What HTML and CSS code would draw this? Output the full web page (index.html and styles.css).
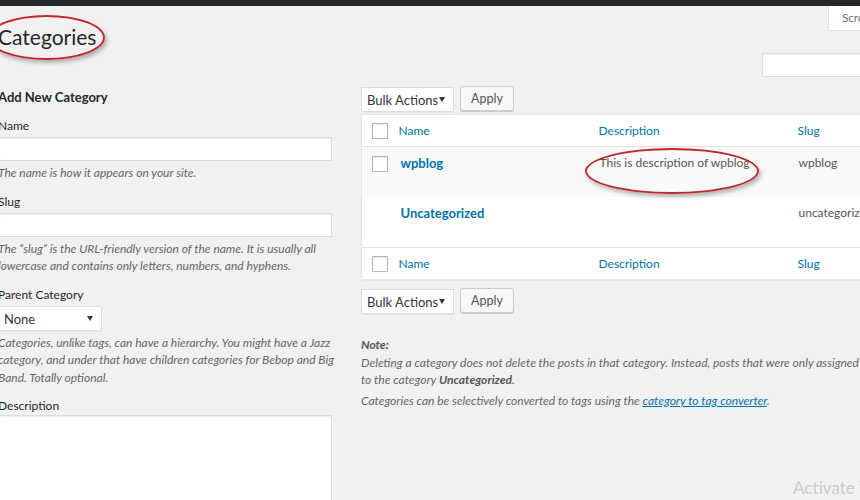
FILE: index.html
```html
<!DOCTYPE html>
<html lang="en">
<head>
<meta charset="utf-8">
<title>Categories</title>
<link rel="stylesheet" href="styles.css">
</head>
<body>
<div class="adminbar"></div>
<div class="wrap">
  <div class="head">
    <h1 class="title">Categories<span class="ring ring-title"></span></h1>
    <div class="screen-tab">Screen Options</div>
  </div>
  <div class="search-row"><input class="search" type="text"></div>
  <div class="cols">
    <div class="col-left">
      <h2 class="sub">Add New Category</h2>
      <div class="field">
        <label class="lbl">Name</label>
        <input class="inp" type="text">
        <p class="help">The name is how it appears on your site.</p>
      </div>
      <div class="field">
        <label class="lbl">Slug</label>
        <input class="inp" type="text">
        <p class="help">The “slug” is the URL-friendly version of the name. It is usually all lowercase and contains only letters, numbers, and hyphens.</p>
      </div>
      <div class="field">
        <label class="lbl">Parent Category</label>
        <div class="select parent">None<span class="caret"></span></div>
        <p class="help">Categories, unlike tags, can have a hierarchy. You might have a Jazz category, and under that have children categories for Bebop and Big Band. Totally optional.</p>
      </div>
      <div class="field">
        <label class="lbl">Description</label>
        <div class="textarea"></div>
      </div>
    </div>
    <div class="col-right">
      <div class="bulk">
        <div class="select bulk-sel">Bulk Actions<span class="caret"></span></div>
        <button class="btn">Apply</button>
      </div>
      <table class="list">
        <colgroup><col class="c-cb"><col class="c-name"><col class="c-desc"><col class="c-slug"></colgroup>
        <thead>
          <tr><th class="cb"><span class="check"></span></th><th>Name</th><th>Description</th><th>Slug</th></tr>
        </thead>
        <tbody>
          <tr class="alt">
            <td class="cb"><span class="check"></span></td>
            <td><a class="row-title">wpblog</a></td>
            <td class="desc-cell">This is description of wpblog<span class="ring ring-desc"></span></td>
            <td>wpblog</td>
          </tr>
          <tr class="last">
            <td class="cb"></td>
            <td><a class="row-title">Uncategorized</a></td>
            <td></td>
            <td>uncategorized</td>
          </tr>
        </tbody>
        <tfoot>
          <tr><th class="cb"><span class="check"></span></th><th>Name</th><th>Description</th><th>Slug</th></tr>
        </tfoot>
      </table>
      <div class="bulk bulk-bottom">
        <div class="select bulk-sel">Bulk Actions<span class="caret"></span></div>
        <button class="btn">Apply</button>
      </div>
      <div class="note">
        <p><strong class="note-h">Note:</strong><br>Deleting a category does not delete the posts in that category. Instead, posts that were only assigned to the deleted category are set<br>to the category <strong>Uncategorized</strong>.</p>
        <p>Categories can be selectively converted to tags using the <a class="link">category to tag converter</a>.</p>
      </div>
    </div>
  </div>
</div>
<div class="activate">Activate Windows</div>
</body>
</html>
```
FILE: styles.css
```css
html, body { margin: 0; padding: 0; }
body {
  background: #f1f1f1;
  font-family: Lato, "Liberation Sans", sans-serif;
  font-size: 12px;
  color: #444;
  overflow: hidden;
  width: 860px;
  height: 500px;
  position: relative;
}
.adminbar { height: 6px; background: #23282d; }
.wrap { margin-left: -2px; }
.head { display: flex; justify-content: space-between; align-items: flex-start; height: 47px; }
.title {
  position: relative;
  margin: 0; padding-top: 16px;
  font-size: 21px; font-weight: 400; line-height: 29px; color: #23282d;
}
.screen-tab {
  width: 120px; height: 25px; box-sizing: border-box;
  margin-right: -88px;
  background: #fff; border: 1px solid #e1e1e1; border-top: 0;
  color: #72777c; padding: 3px 0 0 13px; line-height: 18px; font-size: 12px; letter-spacing: -0.2px;
}
.search-row { display: flex; justify-content: flex-end; height: 34px; }
.search {
  width: 120px; height: 24px; box-sizing: border-box; margin: 0 -22px 0 0;
  border: 1px solid #ddd; background: #fff; box-shadow: inset 0 1px 2px rgba(0,0,0,.07);
}
.cols { display: grid; grid-template-columns: 352px 800px; column-gap: 11px; }
.sub { margin: 0; font-size: 13px; font-weight: 700; line-height: 20px; color: #23282d; }
.field { margin-top: 10px; }
.field + .field { margin-top: 11px; }
.lbl { display: block; line-height: 18px; color: #23282d; margin-bottom: 2px; }
.inp {
  display: block; width: 334px; height: 24px; box-sizing: border-box; margin: 0;
  border: 1px solid #ddd; background: #fff; box-shadow: inset 0 1px 2px rgba(0,0,0,.07);
}
.help { margin: 3px 0 0; font-style: italic; color: #666; line-height: 17.5px; }
.select {
  position: relative; box-sizing: border-box; height: 25px;
  border: 1px solid #ddd; background: #fff; color: #32373c;
  padding: 3px 0 0 5px; line-height: 18px; box-shadow: 0 1px 1px rgba(0,0,0,.04);
}
.caret {
  position: absolute; right: 8px; top: 9px; width: 0; height: 0;
  border-left: 3px solid transparent; border-right: 3px solid transparent;
  border-top: 5px solid #32373c;
}
.parent { width: 104px; font-size: 13px; }
.textarea {
  width: 334px; box-sizing: border-box; margin-top: -2px;
  height: 90px; border: 1px solid #ddd; background: #fff; box-shadow: inset 0 1px 2px rgba(0,0,0,.07);
}
.bulk { display: flex; gap: 6px; align-items: flex-start; height: 25px; }
.bulk-sel { width: 93px; font-size: 13px; }
.btn {
  height: 25px; padding: 0 10px; font: inherit; font-size: 12.5px; color: #555;
  background: #f7f7f7; border: 1px solid #ccc; border-radius: 3px;
  box-shadow: 0 1px 0 #ccc; line-height: 22px; margin-top: -1px;
}
.list {
  margin-top: 2px; width: 600px; table-layout: fixed; border-collapse: collapse;
  background: #fff; border: 1px solid #e5e5e5; box-shadow: 0 1px 1px rgba(0,0,0,.04);
}
.c-cb { width: 27px; } .c-name { width: 200px; } .c-desc { width: 199px; } .c-slug { width: 174px; }
.list th { text-align: left; font-weight: 400; color: #0073aa; padding: 8px 10px; line-height: 15px; height: 15px; }
.list thead tr { border-bottom: 1px solid #e1e1e1; }
.list tfoot tr { border-top: 1px solid #e1e1e1; }
.list td { vertical-align: top; padding: 6px 10px; line-height: 20px; color: #555; }
.list tbody tr { height: 50px; }
.list tbody tr.last { height: 51px; }
.list .alt { background: #f9f9f9; }
.list .cb { padding: 0 0 0 10px; vertical-align: middle; }
.list tbody .cb { vertical-align: top; padding-top: 9px; }
.check {
  display: block; width: 14px; height: 14px; background: #fff;
  border: 1px solid #b4b9be; box-shadow: inset 0 1px 2px rgba(0,0,0,.1);
}
.row-title { color: #0073aa; font-weight: 700; font-size: 13px; padding-left: 2px; }
.list td:nth-child(3), .list td:nth-child(4) { padding-left: 11px; }
.desc-cell { position: relative; }
.bulk-bottom { margin-top: 9px; }
.note { margin-top: 22px; color: #666; font-style: italic; }
.note p { margin: 0 0 3px; line-height: 17.5px; }
.note-h { font-weight: 700; }
.note strong { color: #555; }
.link { color: #0073aa; text-decoration: underline; }
.ring {
  position: absolute; border: 2px solid #c1272d; border-radius: 50%;
  box-shadow: 2px 3px 4px rgba(0,0,0,.28);
  pointer-events: none;
}
.ring-title { left: -10px; top: 9px; width: 113px; height: 41px; }
.ring-desc { left: -4px; top: 1px; width: 170px; height: 42px; }
.activate {
  position: absolute; left: 793px; top: 477px;
  font-size: 17px; color: #cdcdcd; white-space: nowrap;
}
```
